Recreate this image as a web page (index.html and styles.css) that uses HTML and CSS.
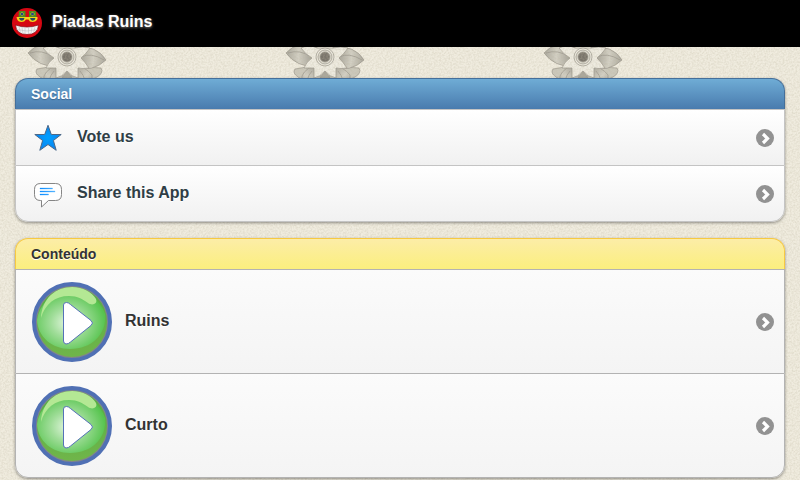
FILE: index.html
```
<!DOCTYPE html>
<html lang="pt">
<head>
    <meta charset="UTF-8">
    <meta name="viewport" content="width=device-width, initial-scale=1.0">
    <title>Piadas Ruins</title>
    <link rel="stylesheet" href="styles.css">
</head>
<body>

<!-- shared shapes -->
<svg class="defs" aria-hidden="true">
    <defs>
        <radialGradient id="ball" cx="45%" cy="55%" r="55%">
            <stop offset="0" stop-color="#e4f7e0"/>
            <stop offset="0.45" stop-color="#a0dd99"/>
            <stop offset="1" stop-color="#57c44f"/>
        </radialGradient>
        <linearGradient id="shade" x1="0" y1="0" x2="0" y2="1">
            <stop offset="0" stop-color="#54ae45"/>
            <stop offset="1" stop-color="#70b54a"/>
        </linearGradient>
        <radialGradient id="star">
            <stop offset="0" stop-color="#00a0ff"/>
            <stop offset="1" stop-color="#0a84f0"/>
        </radialGradient>
        <linearGradient id="line">
            <stop offset="0" stop-color="#0a8cff"/>
            <stop offset="1" stop-color="#55b4ff"/>
        </linearGradient>
    </defs>
    <symbol id="play" viewBox="0 0 80 80">
        <circle cx="40" cy="40" r="38" fill="#81858a" stroke="#5070b4" stroke-width="4"/>
        <circle cx="40" cy="40" r="35" fill="url(#shade)"/>
        <path d="M5 38A35 34 0 0 1 73 32C75 52 60 67 38 67C20 67 6 55 5 38Z" fill="url(#ball)"/>
        <path d="M9 36C10 16 24 5 40 5C51 5 60 10 64 17C66 22 60 24 56 21C50 17 46 14 37 14C23 14 13 22 9 36Z" fill="#b4e894"/>
        <path d="M31.500 23Q31.500 20.500 34.500 20.500Q36.500 20.500 38.500 22.500L59 38.500Q62 41 59 43.500L38.500 60Q36.500 62 34 62Q31.500 61.500 31.500 59Z" fill="#fff" stroke="#5572b8" stroke-width="1"/>
    </symbol>
    <symbol id="arrow" viewBox="0 0 18 18">
        <circle cx="9" cy="9" r="9" fill="#929292"/>
        <path d="M7 5L11.500 9.500L7 14" fill="none" stroke="#fff" stroke-width="3.200"/>
    </symbol>
</svg>

<header class="header">
    <svg class="logo" viewBox="0 0 30 30" aria-hidden="true">
        <circle cx="15" cy="15" r="15" fill="#d60712"/>
        <path d="M7 3L13.500 3V9H6.500ZM17 3L24 3L24.500 9H17Z" fill="#4d8b1b"/>
        <path d="M7.500 6L10 3.800L12.500 6L10 8.200ZM18 6L20.500 3.800L23 6L20.500 8.200Z" fill="#c9cf2a"/>
        <circle cx="10" cy="6" r="1.500" fill="#254783"/>
        <circle cx="20.500" cy="6" r="1.500" fill="#254783"/>
        <path d="M4.500 9H25.500V11Q24 14 20.500 14Q17.500 14 16.500 11.500H14Q12.500 14 9.500 14Q6 14 5 11Z" fill="#f2d51b"/>
        <path d="M7 10H12.500Q12 12.800 9.800 12.800Q7.500 12.800 7 10ZM18 10H23.500Q23 12.800 20.700 12.800Q18.500 12.800 18 10Z" fill="#254b60"/>
        <path d="M3.500 17Q15 21 26.500 17Q26 26.500 15 26.500Q4 26.500 3.500 17Z" fill="#f3f3f3" stroke="#870812" stroke-width="0.700"/>
        <path d="M4.500 21.500Q15 24.500 25.500 21.500M7 18.500L8.500 25M10 19L11 26M13 19V26M16.500 19V26M20 19L19 26M23 18.500L21.500 25" fill="none" stroke="#bbb" stroke-width="0.500"/>
    </svg>
    <h1>Piadas Ruins</h1>
</header>

<main class="content">
    <section class="list social">
        <h2>Social</h2>
        <ul>
            <li>
                <a href="#vote">
                    <svg class="icon" viewBox="0 0 30 30" aria-hidden="true">
                        <path d="M15 2.300L18.300 11.500H28.200L20.400 17.500L23.200 27.300L15 21.500L6.800 27.300L9.600 17.500L1.800 11.500H11.700Z" fill="url(#star)" stroke="#4c6887"/>
                    </svg>
                    <span>Vote us</span>
                    <svg class="arrow" aria-hidden="true"><use href="#arrow"/></svg>
                </a>
            </li>
            <li>
                <a href="#share">
                    <svg class="icon" viewBox="0 0 30 30" aria-hidden="true">
                        <path d="M7.500 4.500H22.500Q28.500 4.500 28.500 10.500V15.500Q28.500 21.500 22.500 21.500H15.500L8.500 28V21.500H7.500Q1.500 21.500 1.500 15.500V10.500Q1.500 4.500 7.500 4.500Z" fill="#fff" stroke="#777" stroke-width="0.900"/>
                        <path d="M7 9H19.500V10H7ZM7 12H22V13H7ZM7 15H15.500V16H7Z" fill="url(#line)" stroke="url(#line)" stroke-width="0.300"/>
                    </svg>
                    <span>Share this App</span>
                    <svg class="arrow" aria-hidden="true"><use href="#arrow"/></svg>
                </a>
            </li>
        </ul>
    </section>

    <section class="list jokes">
        <h2>Conteúdo</h2>
        <ul>
            <li>
                <a href="#ruins">
                    <svg class="thumb" aria-hidden="true"><use href="#play"/></svg>
                    <span>Ruins</span>
                    <svg class="arrow" aria-hidden="true"><use href="#arrow"/></svg>
                </a>
            </li>
            <li>
                <a href="#curto">
                    <svg class="thumb" aria-hidden="true"><use href="#play"/></svg>
                    <span>Curto</span>
                    <svg class="arrow" aria-hidden="true"><use href="#arrow"/></svg>
                </a>
            </li>
        </ul>
    </section>
</main>

</body>
</html>
```

FILE: styles.css
```
* {
    box-sizing: border-box;
}
html {
    scrollbar-width: none;
}
body {
    margin: 0;
    font-family: "Liberation Sans", Arial, sans-serif;
    background-color: #f0ecdf;
    /* paper grain over the flowers */
    background-image:
        url("data:image/svg+xml,%3Csvg xmlns='http://www.w3.org/2000/svg' width='258' height='258'%3E%3Cfilter id='n' x='0' y='0' width='100%25' height='100%25'%3E%3CfeTurbulence type='fractalNoise' baseFrequency='.55' numOctaves='2' stitchTiles='stitch'/%3E%3CfeColorMatrix values='0 0 0 0 .5 0 0 0 0 .46 0 0 0 0 .34 .6 0 0 0 -.2'/%3E%3C/filter%3E%3Crect width='258' height='258' filter='url(%23n)'/%3E%3C/svg%3E"),
        url("data:image/svg+xml,%3Csvg xmlns='http://www.w3.org/2000/svg' width='258' height='100'%3E%3Cdefs%3E%3CradialGradient id='g' gradientUnits='userSpaceOnUse' cx='0' cy='0' r='38'%3E%3Cstop offset='.35' stop-color='%23a5a298'/%3E%3Cstop offset='.7' stop-color='%23d3d0c4'/%3E%3Cstop offset='1' stop-color='%23aeaba0'/%3E%3C/radialGradient%3E%3C/defs%3E%3Cg transform='translate(67 57)' stroke='%2398948a' stroke-width='.7' fill='url(%23g)'%3E%3Cpath d='M18 10L34 11Q37 16 30 20L16 27ZM-18 10L-30 12Q-33 16-27 20L-16 27Z' fill='%23cbc8bb'/%3E%3Cpath d='M8-10Q30-12 39 3Q25 16 8 10ZM-8-10Q-28-17-39-4Q-29 10-8 10Z'/%3E%3Cpath d='M-7 8Q-19 10-23 19Q-24 28-18 38H-2V26ZM7 8Q19 10 25 18Q26 28 20 38H2V26Z'/%3E%3Cpath d='M0 14Q-8 22-7 36H7Q8 22 0 14Z' fill='%23a9a69b'/%3E%3Cpath d='M14 0Q24-5 37 3M-14 0Q-25-8-37-4M13 14Q20 22 19 34M-13 14Q-20 22-18 34' fill='none'/%3E%3Cpath d='M-8-9Q-16-13-24-9Q-20-3-13 1Q-19 5-21 11Q-15 11-11 11V21Q-5 20 0 14Q5 20 11 21V11Q16 12 22 11Q18 5 14 1Q19-3 23-9Q16-11 8-9Z' fill='%23eeebe0'/%3E%3Ccircle r='9' fill='%23eeebe0'/%3E%3Ccircle r='7' fill='%23dfdcd1'/%3E%3Ccircle r='5' fill='%2379746b'/%3E%3C/g%3E%3C/svg%3E");
    background-repeat: repeat, repeat-x;
}
h1, h2, ul {
    margin: 0;
    padding: 0;
}
.defs {
    position: absolute;
    width: 0;
    height: 0;
}
.header {
    display: flex;
    align-items: center;
    gap: 10px;
    padding: 8px 12px;
    background-color: #000;
    border-bottom: 1px solid #000;
}
.header h1 {
    padding-bottom: 2px;
    font-size: 16px;
    line-height: 20px;
    color: #fff;
    text-shadow: 0 1px 3px #888;
}
.logo {
    width: 30px;
    height: 30px;
}
.content {
    padding: 31px 15px 2px;
}
.list {
    margin-bottom: 16px;
    border-radius: 13px;
    box-shadow: 0 1px 3px rgba(0, 0, 0, 0.4);
}
.list:last-child {
    margin-bottom: 0;
}
.list h2 {
    padding: 7px 15px;
    font-size: 14px;
    line-height: 16px;
    border: 1px solid;
    border-bottom: none;
    border-radius: 13px 13px 0 0;
}
.list ul {
    list-style: none;
}
.list a {
    display: flex;
    align-items: center;
    border: 1px solid #c4c4c4;
    border-bottom: none;
    font-size: 16px;
    font-weight: bold;
    line-height: 20px;
    text-decoration: none;
    text-shadow: 0 1px 0 #fff;
}
.list li:last-child a {
    border-bottom: 1px solid #c4c4c4;
    border-radius: 0 0 13px 13px;
}
.list span {
    flex: 1;
    padding-bottom: 2px;
}
.social h2 {
    border-color: #456f9a;
    background-image: linear-gradient(#6facd5, #497bae);
    color: #fff;
    text-shadow: 0 1px 1px #3e6790;
}
.social a {
    padding: 13px 10px 12px 17px;
    background-image: linear-gradient(#fff, #f1f1f1);
    color: #2f3e46;
}
.jokes h2 {
    border-color: #f7c942;
    background-image: linear-gradient(#fceda7, #fbef7e);
    color: #333;
    text-shadow: 0 1px 0 #fff;
}
.jokes a {
    padding: 12px 10px 11px 16px;
    border-color: #b3b3b3;
    background-image: linear-gradient(#fbfbfb, #f4f4f4);
    color: #333;
}
.jokes li:last-child a {
    border-color: #b3b3b3;
}
.icon {
    width: 30px;
    height: 30px;
    margin-right: 14px;
}
.thumb {
    width: 80px;
    height: 80px;
    margin-right: 13px;
}
.arrow {
    width: 18px;
    height: 18px;
}
```
